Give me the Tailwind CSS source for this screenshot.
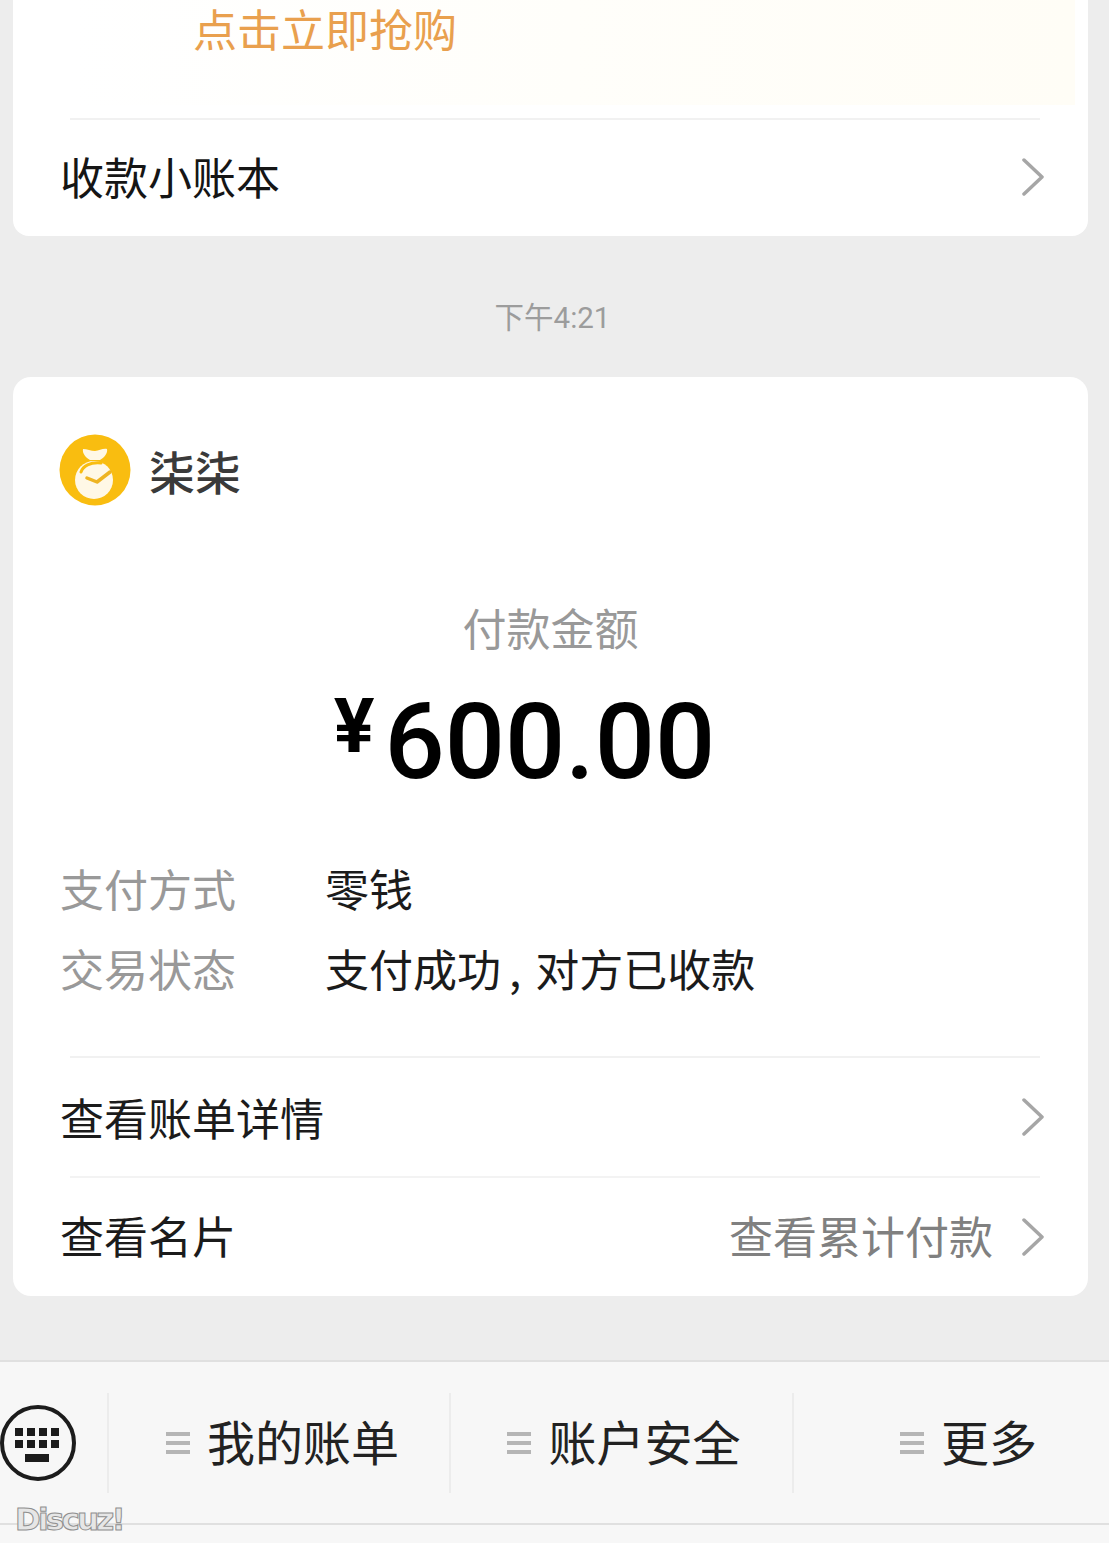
<!DOCTYPE html>
<html lang="en">
<head>
  <meta charset="UTF-8">
  <title>微信支付</title>
  <script src="https://cdn.jsdelivr.net/npm/@tailwindcss/browser@4"></script>
</head>
<body class="bg-[#ededed] font-['Noto_Sans_CJK_SC','Noto_Sans',sans-serif]">
  <div class="relative w-[1109px] h-[1543px] overflow-hidden flex flex-col">
    <!-- Top card -->
    <div class="ml-[13px] mr-[21px] h-[236px] shrink-0 bg-white rounded-b-[16px] flex flex-col">
      <div class="h-[105px] ml-[57px] mr-[13px] bg-gradient-to-r from-white via-[#fffefa] to-[#fffdf6]">
        <p class="ml-[123px] mt-[3px] text-[44px] leading-[50px] text-[#e9a04e]">点击立即抢购</p>
      </div>
      <div class="h-[13px]"></div>
      <div class="ml-[57px] mr-[48px] h-[2px] bg-[#f1f1f1]"></div>
      <div class="flex-1 pl-[47px] pr-[44px] pb-[4px] flex items-center justify-between">
        <span class="text-[44px] leading-[56px] text-[#151515]">收款小账本</span>
        <svg class="w-[22px] h-[38px] mt-[2px]" viewBox="0 0 22 38" fill="none" stroke="#a6a6a6" stroke-width="3.5" stroke-linecap="round" stroke-linejoin="round"><path d="M2 2l18 17L2 36"/></svg>
      </div>
    </div>

    <!-- Time -->
    <div class="h-[141px] shrink-0 pt-[22px] mr-[4px] flex items-center justify-center">
      <span class="text-[29.5px] leading-[36px] text-[#9c9c9c] font-['Roboto','Noto_Sans_CJK_SC',sans-serif]">下午4:21</span>
    </div>

    <!-- Payment card -->
    <div class="ml-[13px] mr-[21px] h-[919px] shrink-0 bg-white rounded-[18px] flex flex-col">
      <div class="h-[187px] pl-[46px] pt-[57px] flex items-start gap-[18px]">
        <svg class="w-[72px] h-[72px] shrink-0" viewBox="0 0 72 72">
          <circle cx="36" cy="36" r="35.5" fill="#f9bd10"/>
          <path d="M24 15c4 0 8 2 12 2s8-3 12-2c1 4-3 9-7 11H31c-4-2-8-7-7-11z" fill="#fff8e6"/>
          <circle cx="35" cy="46" r="19" fill="#fff8e6"/>
          <path d="M22 38c2-6 9-10 20-9" fill="none" stroke="#f9bd10" stroke-width="3" stroke-linecap="round"/>
          <path d="M28 44l10 4 13-10" fill="none" stroke="#eeb422" stroke-width="3.500" stroke-linecap="round" stroke-linejoin="round"/>
        </svg>
        <span class="mt-[6px] text-[46px] leading-[60px] font-medium text-[#3a3a3a]">柒柒</span>
      </div>

      <p class="mt-[35px] text-center text-[44px] leading-[56px] text-[#999999]">付款金额</p>
      <div class="mt-[33px] h-[110px] flex justify-center items-start pr-[52px] font-['Roboto',sans-serif] font-medium text-black">
        <span class="text-[76px] leading-[76px] font-bold">¥</span>
        <span class="text-[106px] leading-[108px] ml-[10px]">600.00</span>
      </div>

      <div class="mt-[62px] pl-[47px] flex flex-col gap-[24px] text-[44px] leading-[56px]">
        <div class="flex"><span class="w-[265px] text-[#999999]">支付方式</span><span class="text-[#1b1b1b]">零钱</span></div>
        <div class="flex"><span class="w-[265px] text-[#999999]">交易状态</span><span class="text-[#1b1b1b]">支付成功<span class="ml-[8px] mr-[14px]">,</span>对方已收款</span></div>
      </div>

      <div class="mt-[60px] ml-[57px] mr-[48px] h-[2px] bg-[#f1f1f1]"></div>
      <div class="h-[118px] pl-[47px] pr-[44px] flex items-center justify-between">
        <span class="text-[44px] leading-[56px] text-[#1b1b1b]">查看账单详情</span>
        <svg class="w-[22px] h-[38px]" viewBox="0 0 22 38" fill="none" stroke="#a6a6a6" stroke-width="3.5" stroke-linecap="round" stroke-linejoin="round"><path d="M2 2l18 17L2 36"/></svg>
      </div>
      <div class="ml-[57px] mr-[48px] h-[2px] bg-[#f3f3f3]"></div>
      <div class="flex-1 pl-[47px] pr-[44px] flex items-center justify-between">
        <span class="text-[44px] leading-[56px] mb-[4px] text-[#1b1b1b]">查看名片</span>
        <div class="flex items-center gap-[29px]">
          <span class="text-[44px] leading-[56px] mb-[4px] text-[#808080]">查看累计付款</span>
          <svg class="w-[22px] h-[38px]" viewBox="0 0 22 38" fill="none" stroke="#a6a6a6" stroke-width="3.5" stroke-linecap="round" stroke-linejoin="round"><path d="M2 2l18 17L2 36"/></svg>
        </div>
      </div>
    </div>

    <!-- Bottom menu -->
    <div class="mt-[64px] h-[165px] shrink-0 bg-[#f7f7f7] border-y-2 border-[#e0e0e0] flex items-center">
      <div class="w-[107px] h-[100px] shrink-0 flex items-center">
        <svg class="w-[78px] h-[78px] shrink-0" viewBox="0 0 78 78">
          <circle cx="38" cy="39" r="36" fill="none" stroke="#1c1c1c" stroke-width="4"/>
          <g fill="#1c1c1c">
            <rect x="15" y="24" width="8" height="8"/><rect x="27" y="24" width="8" height="8"/><rect x="39" y="24" width="8" height="8"/><rect x="51" y="24" width="8" height="8"/>
            <rect x="15" y="36" width="8" height="8"/><rect x="27" y="36" width="8" height="8"/><rect x="39" y="36" width="8" height="8"/><rect x="51" y="36" width="8" height="8"/>
            <rect x="25" y="50" width="24" height="8"/>
          </g>
        </svg>
      </div>
      <div class="w-[342px] h-[100px] shrink-0 border-l-2 border-[#ececec] flex items-center justify-center gap-[17px] pl-[7px]">
        <span class="w-[24px] h-[22px] shrink-0 flex flex-col justify-between"><i class="block h-[4px] bg-[#b5b5b5]"></i><i class="block h-[4px] bg-[#b5b5b5]"></i><i class="block h-[4px] bg-[#b5b5b5]"></i></span>
        <span class="text-[48px] leading-[60px] mb-[6px] text-[#222222]">我的账单</span>
      </div>
      <div class="w-[343px] h-[100px] shrink-0 border-l-2 border-[#ececec] flex items-center justify-center gap-[17px] pl-[5px]">
        <span class="w-[24px] h-[22px] shrink-0 flex flex-col justify-between"><i class="block h-[4px] bg-[#b5b5b5]"></i><i class="block h-[4px] bg-[#b5b5b5]"></i><i class="block h-[4px] bg-[#b5b5b5]"></i></span>
        <span class="text-[48px] leading-[60px] mb-[6px] text-[#222222]">账户安全</span>
      </div>
      <div class="flex-1 h-[100px] border-l-2 border-[#ececec] flex items-center justify-center gap-[17px] pl-[34px]">
        <span class="w-[24px] h-[22px] shrink-0 flex flex-col justify-between"><i class="block h-[4px] bg-[#b5b5b5]"></i><i class="block h-[4px] bg-[#b5b5b5]"></i><i class="block h-[4px] bg-[#b5b5b5]"></i></span>
        <span class="text-[48px] leading-[60px] mb-[6px] text-[#222222]">更多</span>
      </div>
    </div>
    <div class="flex-1 bg-[#f7f7f7]"></div>

    <!-- Watermark over the bar -->
    <span class="absolute left-[15px] top-[1500px] text-[31px] leading-[38px] font-bold tracking-[-2.8px] text-[#e6e6e6] [-webkit-text-stroke:1px_#8f8f8f] font-['DejaVu_Sans',sans-serif]">Discuz!</span>
  </div>
</body>
</html>
